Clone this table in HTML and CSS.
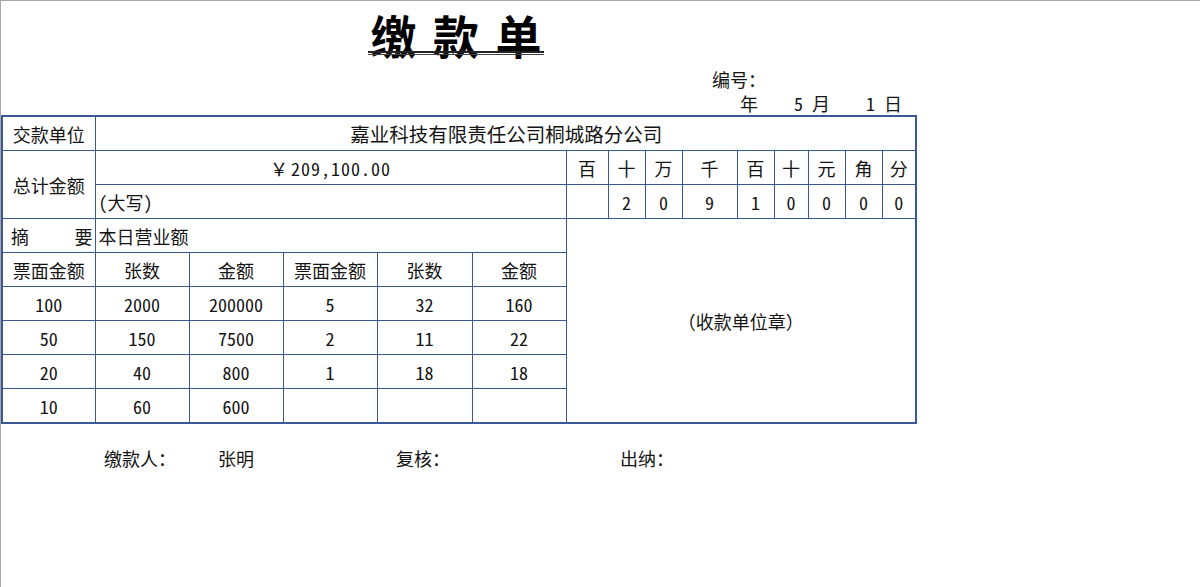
FILE: index.html
```html
<!DOCTYPE html>
<html lang="zh-CN">
<head>
<meta charset="utf-8">
<title>缴款单</title>
<link rel="stylesheet" href="styles.css">
</head>
<body>
<div class="sheet">
  <div class="title-row"><span class="title">缴 款 单</span></div>
  <div class="no-row">编号：</div>
  <div class="date-row">年    5 月    1 日</div>
  <table class="grid">
    <colgroup>
      <col style="width:93px"><col style="width:94px"><col style="width:94px"><col style="width:94px"><col style="width:95px"><col style="width:94px">
      <col style="width:42px"><col style="width:37px"><col style="width:37px"><col style="width:55px"><col style="width:37px"><col style="width:34px"><col style="width:37px"><col style="width:37px"><col style="width:34px">
    </colgroup>
    <tr>
      <td>交款单位</td>
      <td colspan="14" class="big">嘉业科技有限责任公司桐城路分公司</td>
    </tr>
    <tr>
      <td rowspan="2">总计金额</td>
      <td colspan="5" class="amt"><span class="yen">￥</span>209,100.00</td>
      <td>百</td><td>十</td><td>万</td><td>千</td><td>百</td><td>十</td><td>元</td><td>角</td><td>分</td>
    </tr>
    <tr>
      <td colspan="5" class="l">(大写)</td>
      <td></td><td>2</td><td>0</td><td>9</td><td>1</td><td>0</td><td>0</td><td>0</td><td>0</td>
    </tr>
    <tr>
      <td class="zy"><div class="zy-in"><span>摘</span><span>要</span></div></td>
      <td colspan="5" class="l">本日营业额</td>
      <td colspan="9" rowspan="6"><span class="po">（</span>收款单位章<span class="pc">）</span></td>
    </tr>
    <tr>
      <td>票面金额</td><td>张数</td><td>金额</td><td>票面金额</td><td>张数</td><td>金额</td>
    </tr>
    <tr>
      <td>100</td><td>2000</td><td>200000</td><td>5</td><td>32</td><td>160</td>
    </tr>
    <tr>
      <td>50</td><td>150</td><td>7500</td><td>2</td><td>11</td><td>22</td>
    </tr>
    <tr>
      <td>20</td><td>40</td><td>800</td><td>1</td><td>18</td><td>18</td>
    </tr>
    <tr>
      <td>10</td><td>60</td><td>600</td><td></td><td></td><td></td>
    </tr>
  </table>
  <div class="sign-row">
    <span class="s1">缴款人：</span><span class="s2">张明</span><span class="s3">复核：</span><span class="s4">出纳：</span>
  </div>
</div>
</body>
</html>
```
FILE: styles.css
```css
html, body {
  margin: 0;
  padding: 0;
  background: #fff;
}
body {
  font-family: "Noto Sans Mono CJK SC", "Noto Sans CJK SC", "Liberation Mono", monospace;
  font-size: 18px;
  color: #141414;
}
.sheet {
  width: 1199px;
  height: 586px;
  border-top: 1px solid #a8a8a8;
  border-left: 1px solid #a8a8a8;
  overflow: hidden;
}
.title-row {
  width: 916px;
  height: 66px;
  line-height: 66px;
  text-align: center;
}
.title {
  position: relative;
  display: inline-block;
  font-family: "Noto Sans CJK SC", sans-serif;
  font-weight: 700;
  font-size: 46px;
  letter-spacing: 3px;
  color: #000;
  margin-left: -6px;
  padding-left: 3px;
}
.title::after {
  content: "";
  position: absolute;
  left: 0;
  right: 0;
  top: 50px;
  height: 1px;
  border-top: 2px solid #222;
  border-bottom: 1px solid #444;
}
.no-row {
  height: 24px;
  line-height: 24px;
  padding-left: 711px;
}
.date-row {
  height: 24px;
  line-height: 24px;
  padding-left: 739px;
  white-space: pre;
}
.grid {
  border-collapse: collapse;
  table-layout: fixed;
  width: 914px;
  border: 2px solid #3a5894;
}
.grid td {
  border: 1px solid #3a5894;
  height: 33px;
  padding: 0;
  text-align: center;
  vertical-align: middle;
  line-height: 20px;
  white-space: nowrap;
  overflow: hidden;
}
.grid td.l {
  text-align: left;
  padding-left: 3px;
}
.grid td.big {
  font-size: 19.5px;
  padding-left: 2px;
}
.grid td.amt {
  letter-spacing: 1px;
}
.yen {
  display: inline-block;
  width: 21px;
  text-align: left;
}
.po, .pc {
  display: inline-block;
  width: 18px;
}
.po { text-align: right; }
.pc { text-align: left; }
.zy-in {
  display: flex;
  justify-content: space-between;
  padding: 0 2px 0 8px;
}
.sign-row {
  display: flex;
  margin-top: 22px;
  height: 24px;
  line-height: 24px;
  padding-left: 103px;
}
.s1 { width: 114px; }
.s2 { width: 178px; }
.s3 { width: 224px; }
```
